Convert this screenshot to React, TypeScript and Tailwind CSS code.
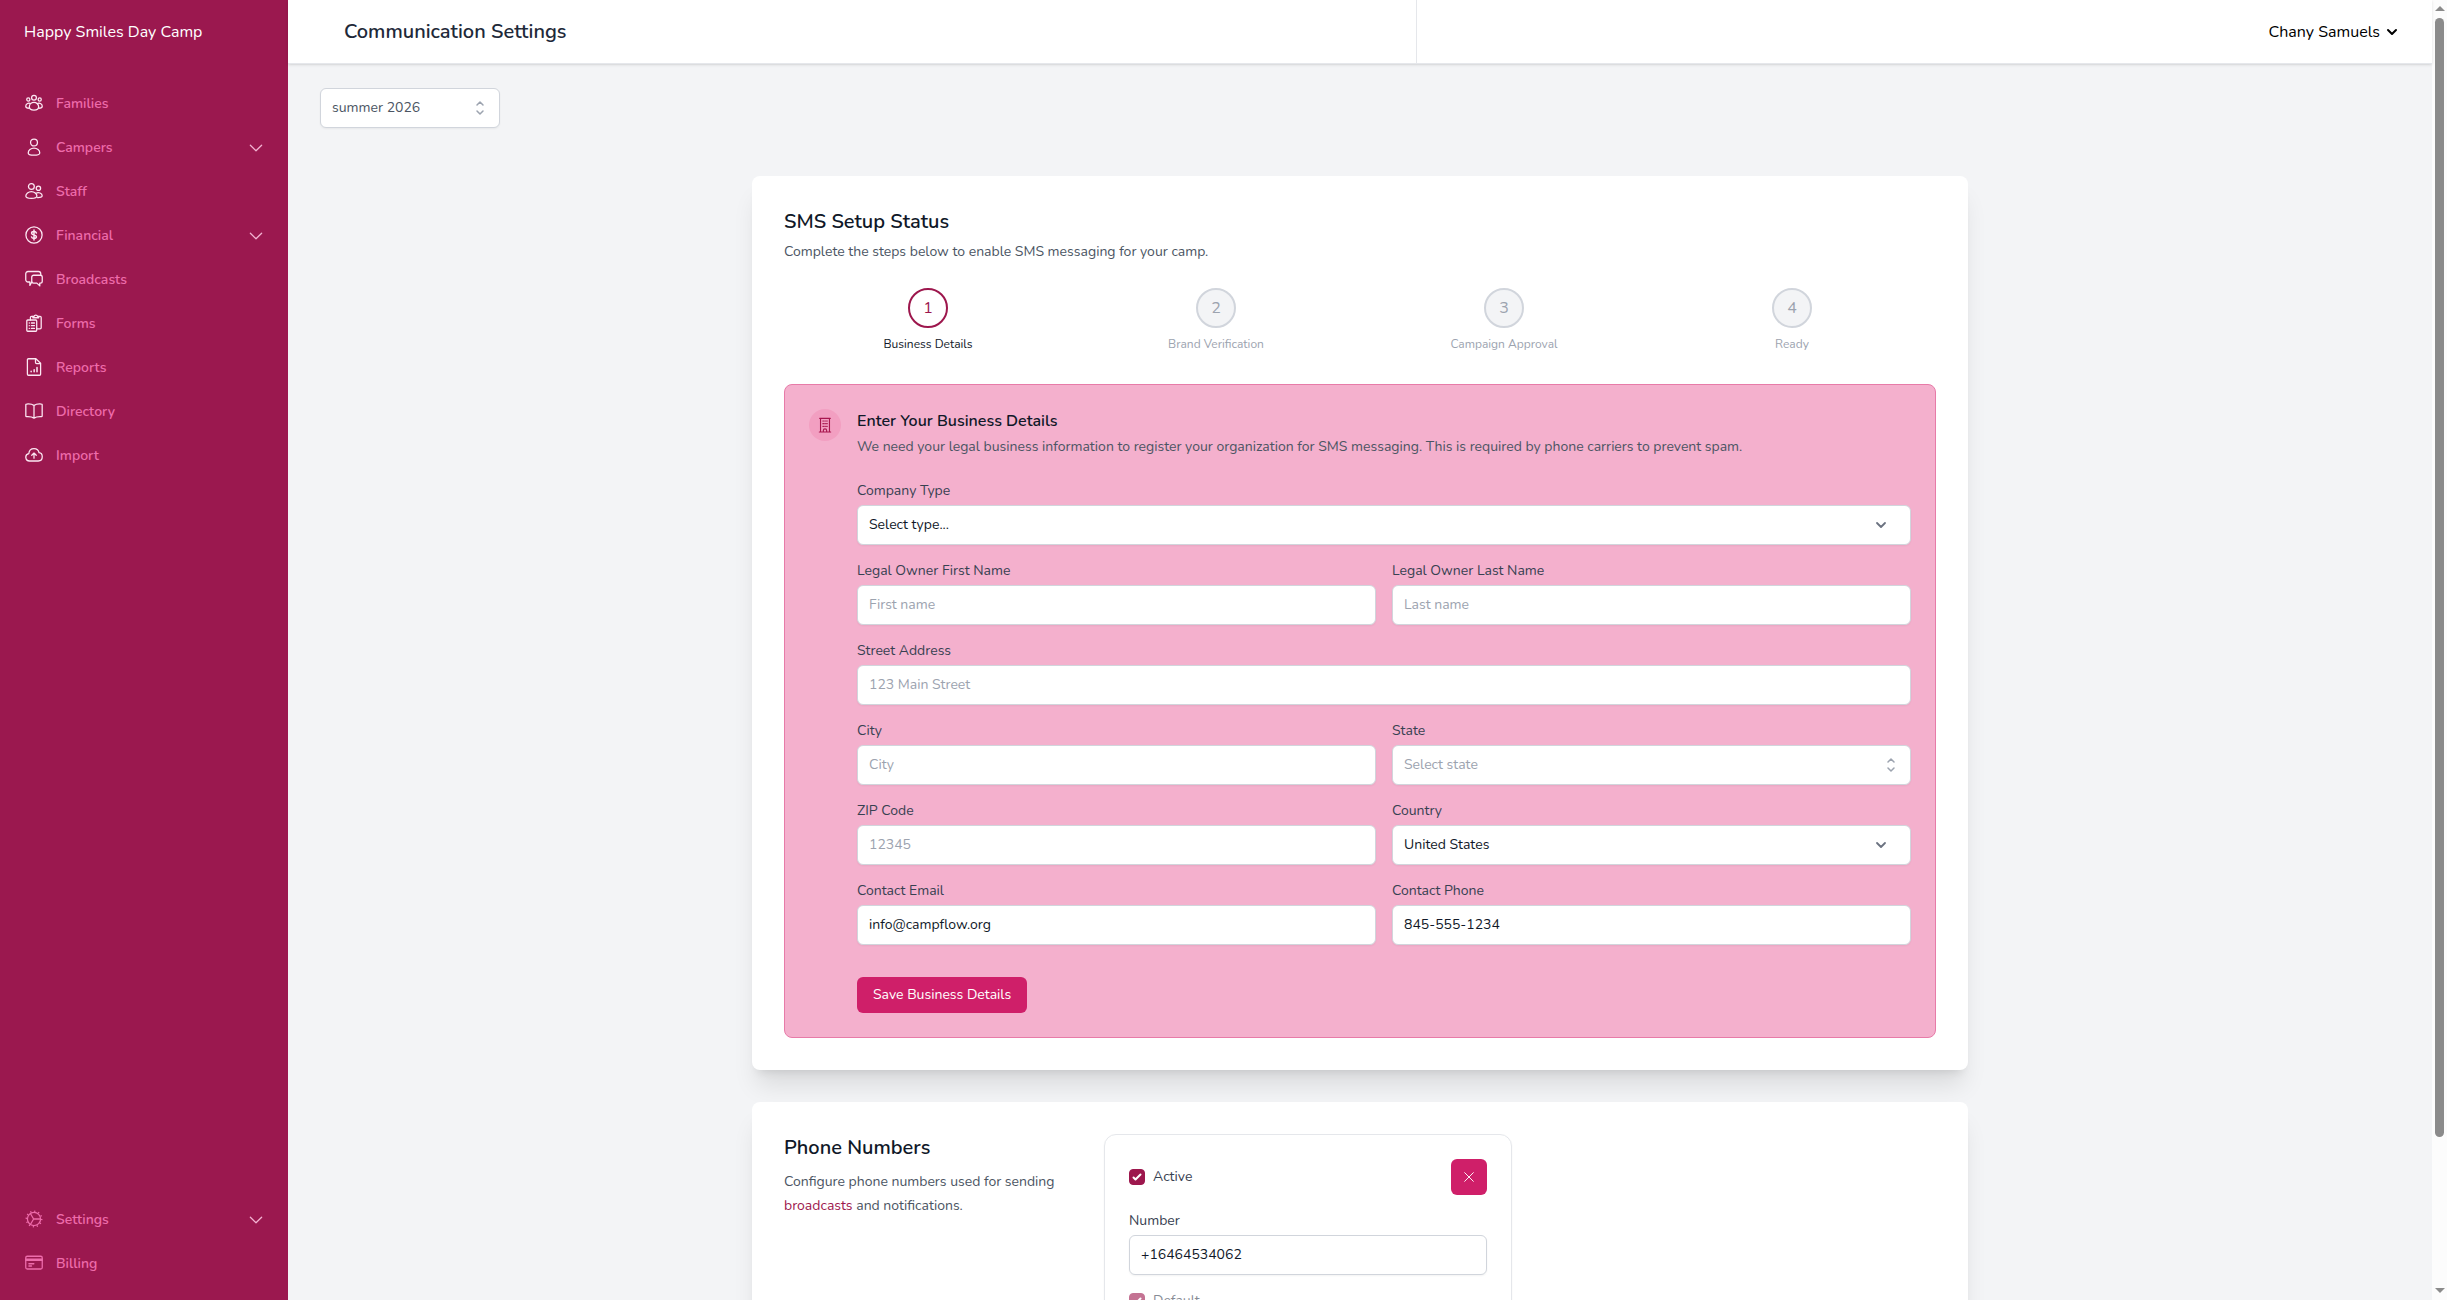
import { useState } from 'react';
import type { ReactNode } from 'react';
import clsx from 'clsx';

// Icons (24x24 outline set)
function Icon({ children, className = 'mx-px size-[18px]' }: { children: ReactNode; className?: string }) {
  return (
    <svg
      viewBox="0 0 24 24"
      fill="none"
      stroke="currentColor"
      strokeWidth={1.7}
      strokeLinecap="round"
      strokeLinejoin="round"
      aria-hidden="true"
      className={clsx('shrink-0', className)}
    >
      {children}
    </svg>
  );
}

const FamiliesIcon = () => (
  <Icon>
    <circle cx="12" cy="5" r="3.2" />
    <circle cx="4.4" cy="7.4" r="2.1" />
    <circle cx="19.6" cy="7.4" r="2.1" />
    <path d="M12 11.3c-3.4 0-6.2 2.6-6.2 5.8 0 3 2.8 4.4 6.2 4.4s6.2-1.4 6.2-4.4c0-3.2-2.8-5.8-6.2-5.8Z" />
    <path d="M6.9 12.6C4 11.6 1 13.5 1 16.2c0 1.7 1.8 2.7 4.6 2.8M17.1 12.600c2.900-1 5.900.9 5.900 3.600 0 1.700-1.800 2.700-4.600 2.800" />
  </Icon>
);

const CampersIcon = () => (
  <Icon>
    <circle cx="12" cy="6" r="4.6" />
    <path d="M12 13.600c-4.300 0-7.700 2.900-7.700 6.300 0 1.900 3.400 3 7.700 3s7.700-1.100 7.700-3c0-3.400-3.400-6.300-7.700-6.300Z" />
  </Icon>
);

const StaffIcon = () => (
  <Icon>
    <circle cx="8.5" cy="6" r="3.9" />
    <circle cx="17.9" cy="8.3" r="2.9" />
    <path d="M8.500 12.800c-4 0-7.400 2.900-7.400 5.900 0 2.400 3.400 3.200 7.400 3.200s7.400-.8 7.400-3.200c0-3-3.400-5.900-7.400-5.900Z" />
    <path d="M14.600 15.100c3.500-2.300 8.300 0 8.300 3.200 0 1.800-2.400 2.600-6.200 2.500" />
  </Icon>
);

const FinancialIcon = () => (
  <Icon>
    <circle cx="12" cy="12" r="10.8" />
    <path d="M15.200 9.300c-.4-1.300-1.500-1.900-3.200-1.900-1.900 0-3.200.8-3.200 2.200 0 3.200 6.400 1.500 6.400 4.800 0 1.400-1.300 2.200-3.200 2.200-1.800 0-3-.7-3.300-2M12 5.300v13.400" strokeWidth={2} />
  </Icon>
);

const BroadcastsIcon = () => (
  <Icon>
    <path d="M9 16l-2.500 4.500V16H4a3 3 0 0 1-3-3V5a3 3 0 0 1 3-3h14a3 3 0 0 1 3 3v1.500" />
    <path d="M11.500 7h9A2.500 2.500 0 0 1 23 9.500v5.500a2.500 2.500 0 0 1-2.500 2.500h-.8v3.700l-3.900-3.700h-4.300A2.500 2.500 0 0 1 9 15V9.500A2.500 2.500 0 0 1 11.500 7Z" />
  </Icon>
);

const FormsIcon = () => (
  <Icon>
    <path d="M3.600 8h10.800a1.200 1.200 0 0 1 1.200 1.200v12.600a1.200 1.200 0 0 1-1.200 1.200H3.600a1.200 1.200 0 0 1-1.200-1.200V9.200A1.200 1.200 0 0 1 3.600 8Z" />
    <path d="M5.700 12h.1M8.500 12h4.100M5.700 15.600h.1M8.500 15.600h4.100M5.700 19.200h.1M8.500 19.200h4.100" />
    <path d="M7.200 8V4.800a1.500 1.500 0 0 1 1.500-1.500h1.800M18.300 3.300h1.800a1.500 1.500 0 0 1 1.500 1.500v13.400a1.500 1.500 0 0 1-1.500 1.500h-4.500" />
    <path d="M10.500 5V3.300h1.400a2.600 2.600 0 0 1 5 0h1.400V5Z" />
  </Icon>
);

const ReportsIcon = () => (
  <Icon>
    <path d="M19.400 23H4.600A1.400 1.400 0 0 1 3.200 21.600V2.400A1.400 1.400 0 0 1 4.600 1h9.900l6.300 6.100v14.500a1.400 1.400 0 0 1-1.400 1.400Z" />
    <path d="M14 1.200v4.800a1.500 1.500 0 0 0 1.500 1.500h5" />
    <path d="M8.200 17.800v.4M12.200 15.700v2.500M16 12.500v5.700" strokeWidth={2} />
  </Icon>
);

const DirectoryIcon = () => (
  <Icon>
    <path d="M12 4.600C9.800 2.900 5.600 2.400 2 2.700a.9.9 0 0 0-.9.9v15c0 .6.4.9 1 .9 3.500-.2 7.700.4 9.900 2 2.200-1.600 6.400-2.200 9.900-2 .6 0 1-.3 1-.9v-15a.9.9 0 0 0-.9-.9c-3.600-.3-7.800.2-10 1.900ZM12 4.600v16.900" />
  </Icon>
);

const ImportIcon = () => (
  <Icon>
    <path d="M6.200 20a5 5 0 0 1-1.100-9.900C5.400 6 8.300 3.400 12 3.400c3.500 0 6.200 2.200 6.700 5.500 2.500.2 4.300 2.600 4.300 5.500 0 3.200-2.200 5.600-5.400 5.600Z" />
    <path d="M12 16.300V9.800M9 12.300l3-2.900 3 2.900" />
  </Icon>
);

const SettingsIcon = () => (
  <Icon>
    <circle cx="12" cy="12" r="8.8" />
    <circle cx="12" cy="12" r="10.3" strokeDasharray="1.6 3.79" strokeWidth={2} strokeLinecap="butt" />
    <path d="M11.500 12H20.500M11.500 12 7.200 4.600M11.500 12 7.200 19.400" />
  </Icon>
);

const BillingIcon = () => (
  <Icon>
    <rect x="1" y="3" width="22" height="17" rx="2" />
    <path d="M1 7h22M1 8.600h22M5.200 13h6.600M5.200 16h3.500" />
  </Icon>
);

const BuildingIcon = () => (
  <Icon className="size-4">
    <path d="M4 2h16M3.500 22.500h17M5.300 2v20.500M18.700 2v20.500M9.500 22.500v-2.200a2.500 2.500 0 0 1 5 0v2.200" />
    <path d="M8.800 6h1M11.600 6h1M14.400 6h1M8.800 10h1M11.600 10h1M14.400 10h1M8.800 14h1M11.600 14h1M14.400 14h1" />
  </Icon>
);

const ChevronDownIcon = () => (
  <Icon>
    <path d="m19.500 8.250-7.500 7.500-7.500-7.500" />
  </Icon>
);

const ChevronUpDownIcon = () => (
  <svg viewBox="0 0 20 20" fill="none" stroke="currentColor" strokeWidth={1.5} strokeLinecap="round" strokeLinejoin="round" aria-hidden="true" className="size-5">
    <path d="m7 7 3-3 3 3m0 6-3 3-3-3" />
  </svg>
);

const mainNav = [
  { name: 'Families', icon: FamiliesIcon },
  { name: 'Campers', icon: CampersIcon, children: true },
  { name: 'Staff', icon: StaffIcon },
  { name: 'Financial', icon: FinancialIcon, children: true },
  { name: 'Broadcasts', icon: BroadcastsIcon },
  { name: 'Forms', icon: FormsIcon },
  { name: 'Reports', icon: ReportsIcon },
  { name: 'Directory', icon: DirectoryIcon },
  { name: 'Import', icon: ImportIcon },
];

const footerNav = [
  { name: 'Settings', icon: SettingsIcon, children: true },
  { name: 'Billing', icon: BillingIcon },
];

const steps = ['Business Details', 'Brand Verification', 'Campaign Approval', 'Ready'];

const control = 'block w-full h-10 rounded-md border border-gray-300 bg-white px-[11px] text-sm text-gray-900 shadow-xs focus:outline-2 focus:outline-pink-700';
const textInput = clsx(control, 'pb-0.5 placeholder:text-[#9ca3af]');

function NavList({ items, iconClass }: { items: typeof mainNav; iconClass: string }) {
  return (
    <ul>
      {items.map((item) => (
        <li key={item.name}>
          <a href="#" className="flex h-11 items-center gap-3 pl-6 pr-[22px] text-sm font-semibold text-[#ee6cab] hover:text-white">
            <span className={clsx('pb-0.5', iconClass)}>
              <item.icon />
            </span>
            <span className="flex-1">{item.name}</span>
            {item.children && (
              <span className="text-[#f3b3d2]">
                <ChevronDownIcon />
              </span>
            )}
          </a>
        </li>
      ))}
    </ul>
  );
}

function Field({ id, label, wide, children }: { id: string; label: string; wide?: boolean; children: ReactNode }) {
  return (
    <div className={wide ? 'col-span-2' : ''}>
      <label htmlFor={id} className="block text-sm text-[#374151]">
        {label}
      </label>
      <div className="relative mt-1">{children}</div>
    </div>
  );
}

function SelectBox({ id, options }: { id: string; options: string[] }) {
  return (
    <>
      <select id={id} className={clsx(control, 'appearance-none')}>
        {options.map((o) => (
          <option key={o}>{o}</option>
        ))}
      </select>
      <svg viewBox="0 0 20 20" fill="none" stroke="#6b7280" strokeLinecap="round" strokeLinejoin="round" className="pointer-events-none absolute right-5 top-[10px] size-5">
        <path d="m6 8 4 4 4-4" strokeWidth={1.8} />
      </svg>
    </>
  );
}

function CheckBox({ id, label, checked, onChange, disabled }: { id: string; label: string; checked: boolean; onChange?: () => void; disabled?: boolean }) {
  return (
    <label htmlFor={id} className={clsx('flex items-center gap-2 text-sm text-[#374151]', disabled && 'opacity-60')}>
      <span className="relative size-4">
        <input
          id={id}
          type="checkbox"
          checked={checked}
          onChange={onChange}
          disabled={disabled}
          className="peer block size-4 appearance-none rounded border border-gray-300 bg-white checked:border-[#9d174d] checked:bg-[#9d174d]"
        />
        <svg viewBox="0 0 16 16" fill="#fff" className="pointer-events-none absolute inset-0 hidden size-4 peer-checked:block">
          <path d="M12.207 4.793a1 1 0 0 1 0 1.414l-5 5a1 1 0 0 1-1.414 0l-2-2a1 1 0 0 1 1.414-1.414L6.5 9.086l4.293-4.293a1 1 0 0 1 1.414 0z" />
        </svg>
      </span>
      {label}
    </label>
  );
}

function Scrollbar() {
  return (
    <div aria-hidden="true" className="flex w-[15px] shrink-0 flex-col items-center bg-[#fcfcfc] pt-1.5 pb-[7px]">
      <div className="border-x-[5px] border-b-[5px] border-x-transparent border-b-[#8b8b8b]" />
      <div className="mt-[7px] w-[9px] flex-[1119] rounded-full bg-[#8b8b8b]" />
      <div className="flex-[151]" />
      <div className="border-x-[5px] border-t-[5px] border-x-transparent border-t-[#8b8b8b]" />
    </div>
  );
}

function App() {
  const [season, setSeason] = useState('summer 2026');
  const [email, setEmail] = useState('info@campflow.org');
  const [phone, setPhone] = useState('845-555-1234');
  const [number, setNumber] = useState('+16464534062');
  const [active, setActive] = useState(true);

  return (
    <div className="flex h-screen overflow-hidden bg-gray-100 font-['Nunito','Roboto',sans-serif] text-gray-900">
      {/* Sidebar */}
      <aside className="flex w-72 shrink-0 flex-col bg-[#9b184f]">
        <div className="flex h-16 shrink-0 items-center px-6 text-base text-white">Happy Smiles Day Camp</div>
        <nav className="flex flex-1 flex-col justify-between pt-[18px] pb-[14px]">
          <NavList items={mainNav} iconClass="text-pink-100" />
          <NavList items={footerNav} iconClass="text-[#ee6cab]" />
        </nav>
      </aside>

      <div className="flex min-w-0 flex-1 flex-col">
        {/* Header */}
        <header className="z-10 flex h-16 shrink-0 border-b border-gray-200 bg-white shadow-sm">
          <div className="flex flex-1 items-center border-r border-gray-200 px-14">
            <h1 className="text-xl font-semibold text-gray-800">Communication Settings</h1>
          </div>
          <div className="flex flex-1 items-center justify-end">
            <button type="button" className="mr-[30px] flex items-center gap-0.5 text-base text-black">
              Chany Samuels
              <svg viewBox="0 0 20 20" fill="currentColor" className="size-5">
                <path d="M5.293 7.293a1 1 0 0 1 1.414 0L10 10.586l3.293-3.293a1 1 0 1 1 1.414 1.414l-4 4a1 1 0 0 1-1.414 0l-4-4a1 1 0 0 1 0-1.414z" />
              </svg>
            </button>
          </div>
        </header>

        <main className="flex-1 overflow-hidden px-8 pt-6">
          <div className="relative w-[180px]">
            <select
              aria-label="Season"
              value={season}
              onChange={(e) => setSeason(e.target.value)}
              className="block h-10 w-full appearance-none rounded-md border border-gray-300 bg-white px-[11px] text-sm text-[#4b5563] shadow-xs"
            >
              <option>summer 2026</option>
              <option>summer 2025</option>
            </select>
            <span className="pointer-events-none absolute right-[10px] top-[10px] text-[#9ca3af]">
              <ChevronUpDownIcon />
            </span>
          </div>

          <div className="mx-auto mt-12 flex max-w-[1216px] flex-col gap-8">
            {/* SMS setup */}
            <section className="rounded-lg bg-white p-8 shadow-xl">
              <h2 className="text-xl font-semibold">SMS Setup Status</h2>
              <p className="mt-1 text-sm leading-6 text-[#4b5563]">Complete the steps below to enable SMS messaging for your camp.</p>

              <ol className="mt-6 grid grid-cols-4">
                {steps.map((step, i) => (
                  <li key={step} className="flex flex-col items-center">
                    <span
                      className={clsx(
                        'flex size-10 items-center justify-center rounded-full border-2 text-base',
                        i === 0 ? 'border-[#9d174d] bg-white text-[#9d174d]' : 'border-gray-300 bg-gray-100 text-[#9ca3af]'
                      )}
                    >
                      {i + 1}
                    </span>
                    <span className={clsx('mt-2 text-xs', i === 0 ? 'text-gray-900' : 'text-[#9ca3af]')}>{step}</span>
                  </li>
                ))}
              </ol>

              <div className="mt-8 flex gap-4 rounded-lg border border-[#e77ba8] bg-[#f4b0cd] p-6">
                <div className="flex size-8 shrink-0 items-center justify-center rounded-full bg-[#f29fc1] text-[#a8174f]">
                  <BuildingIcon />
                </div>
                <form className="min-w-0 flex-1" onSubmit={(e) => e.preventDefault()}>
                  <h3 className="text-base font-semibold">Enter Your Business Details</h3>
                  <p className="mt-1 text-sm text-[#4b5563]">
                    We need your legal business information to register your organization for SMS messaging. This is required by phone carriers to prevent spam.
                  </p>

                  <div className="mt-6 grid grid-cols-2 gap-4">
                    <Field id="company-type" label="Company Type" wide>
                      <SelectBox id="company-type" options={['Select type...', 'Private', 'Non-profit']} />
                    </Field>
                    <Field id="first-name" label="Legal Owner First Name">
                      <input id="first-name" type="text" placeholder="First name" className={textInput} />
                    </Field>
                    <Field id="last-name" label="Legal Owner Last Name">
                      <input id="last-name" type="text" placeholder="Last name" className={textInput} />
                    </Field>
                    <Field id="street" label="Street Address" wide>
                      <input id="street" type="text" placeholder="123 Main Street" className={textInput} />
                    </Field>
                    <Field id="city" label="City">
                      <input id="city" type="text" placeholder="City" className={textInput} />
                    </Field>
                    <Field id="state" label="State">
                      <input id="state" type="text" role="combobox" aria-expanded="false" placeholder="Select state" className={textInput} />
                      <span className="pointer-events-none absolute right-[10px] top-[10px] text-[#9ca3af]">
                        <ChevronUpDownIcon />
                      </span>
                    </Field>
                    <Field id="zip" label="ZIP Code">
                      <input id="zip" type="text" placeholder="12345" className={textInput} />
                    </Field>
                    <Field id="country" label="Country">
                      <SelectBox id="country" options={['United States', 'Canada']} />
                    </Field>
                    <Field id="email" label="Contact Email">
                      <input id="email" type="email" value={email} onChange={(e) => setEmail(e.target.value)} className={textInput} />
                    </Field>
                    <Field id="phone" label="Contact Phone">
                      <input id="phone" type="tel" value={phone} onChange={(e) => setPhone(e.target.value)} className={textInput} />
                    </Field>
                  </div>

                  <button type="submit" className="mt-8 flex h-9 items-center rounded-md bg-[#cf1f69] px-4 text-sm text-white hover:bg-pink-700">
                    Save Business Details
                  </button>
                </form>
              </div>
            </section>

            {/* Phone numbers */}
            <section className="flex gap-8 rounded-lg bg-white p-8 shadow-xl">
              <div className="w-72 shrink-0">
                <h2 className="text-xl font-semibold">Phone Numbers</h2>
                <p className="mt-2 text-sm leading-6 text-[#4b5563]">
                  Configure phone numbers used for sending{' '}
                  <a href="#" className="text-[#9d174d]">
                    broadcasts
                  </a>{' '}
                  and notifications.
                </p>
              </div>
              <div className="grid flex-1 grid-cols-2 gap-4">
                <div className="rounded-xl border border-gray-200 p-6 shadow-xs">
                  <div className="flex items-center justify-between">
                    <CheckBox id="active" label="Active" checked={active} onChange={() => setActive(!active)} />
                    <button type="button" aria-label="Remove number" className="flex size-9 items-center justify-center rounded-md bg-[#cf1f69] text-white">
                      <Icon className="size-4">
                        <path d="M5.500 5.500l13 13M18.500 5.500l-13 13" strokeWidth={1.400} />
                      </Icon>
                    </button>
                  </div>
                  <div className="mt-4">
                    <Field id="number" label="Number">
                      <input id="number" type="tel" value={number} onChange={(e) => setNumber(e.target.value)} className={textInput} />
                    </Field>
                  </div>
                  <div className="mt-4">
                    <CheckBox id="default" label="Default" checked disabled />
                  </div>
                </div>
              </div>
            </section>
          </div>
        </main>
      </div>

      <Scrollbar />
    </div>
  );
}

export default App;
